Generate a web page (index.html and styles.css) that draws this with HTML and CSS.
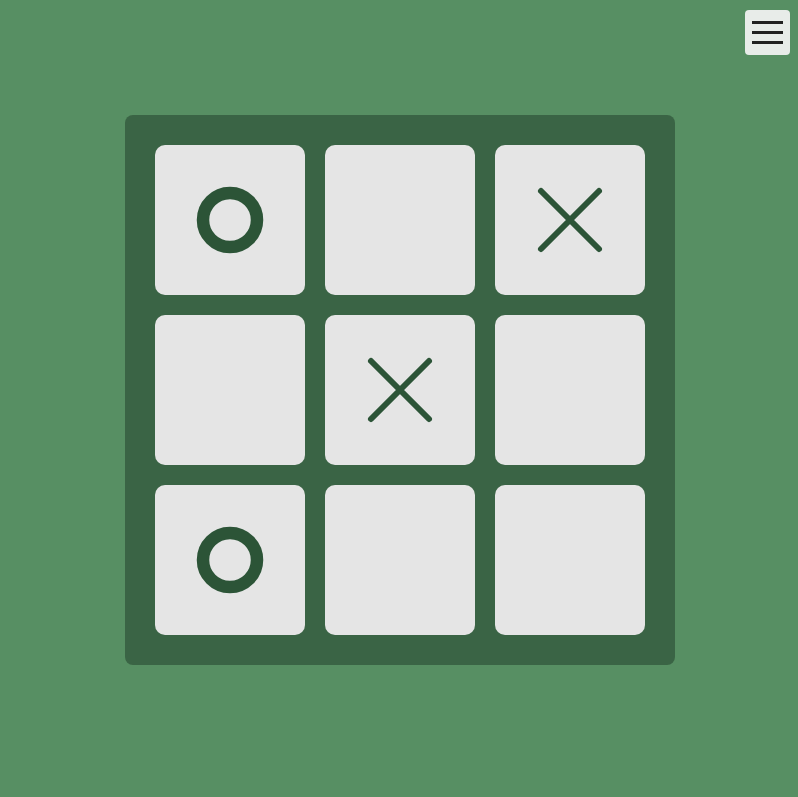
FILE: index.html
```html
<!DOCTYPE html>
<html>
<head>
<meta charset="utf-8">
<link rel="stylesheet" href="styles.css">
</head>
<body>
<button class="menu" aria-label="Menu"><span></span><span></span><span></span></button>
<main class="page">
  <div class="board">
    <div class="cell"><svg viewBox="0 0 150 150" class="mark"><circle cx="75" cy="75" r="27" /></svg></div>
    <div class="cell"></div>
    <div class="cell"><svg viewBox="0 0 150 150" class="mark"><path d="M46 46L104 104M104 46L46 104" /></svg></div>
    <div class="cell"></div>
    <div class="cell"><svg viewBox="0 0 150 150" class="mark"><path d="M46 46L104 104M104 46L46 104" /></svg></div>
    <div class="cell"></div>
    <div class="cell"><svg viewBox="0 0 150 150" class="mark"><circle cx="75" cy="75" r="27" /></svg></div>
    <div class="cell"></div>
    <div class="cell"></div>
  </div>
</main>
</body>
</html>
```
FILE: styles.css
```css
html, body {
  margin: 0;
  padding: 0;
  background: #578f63;
  height: 100%;
}
body {
  font-family: "Liberation Sans", sans-serif;
}
.page {
  display: flex;
  justify-content: center;
  padding: 115px 0 0 2px;
}
.board {
  display: grid;
  grid-template-columns: repeat(3, 150px);
  grid-template-rows: repeat(3, 150px);
  gap: 20px;
  padding: 30px;
  background: #3a6445;
  border-radius: 8px;
}
.cell {
  background: #e5e5e5;
  border-radius: 10px;
}
.mark {
  display: block;
  width: 150px;
  height: 150px;
  fill: none;
  stroke: #2c5437;
}
.mark circle {
  stroke-width: 12.5;
}
.mark path {
  stroke-width: 6;
  stroke-linecap: round;
}
.menu {
  position: absolute;
  top: 10px;
  right: 8px;
  width: 45px;
  height: 45px;
  padding: 11px 7px 0;
  border: none;
  border-radius: 4px;
  background: #e8ece9;
  display: flex;
  flex-direction: column;
  gap: 7px;
  cursor: pointer;
}
.menu span {
  display: block;
  width: 31px;
  height: 3px;
  background: #222;
}
```
